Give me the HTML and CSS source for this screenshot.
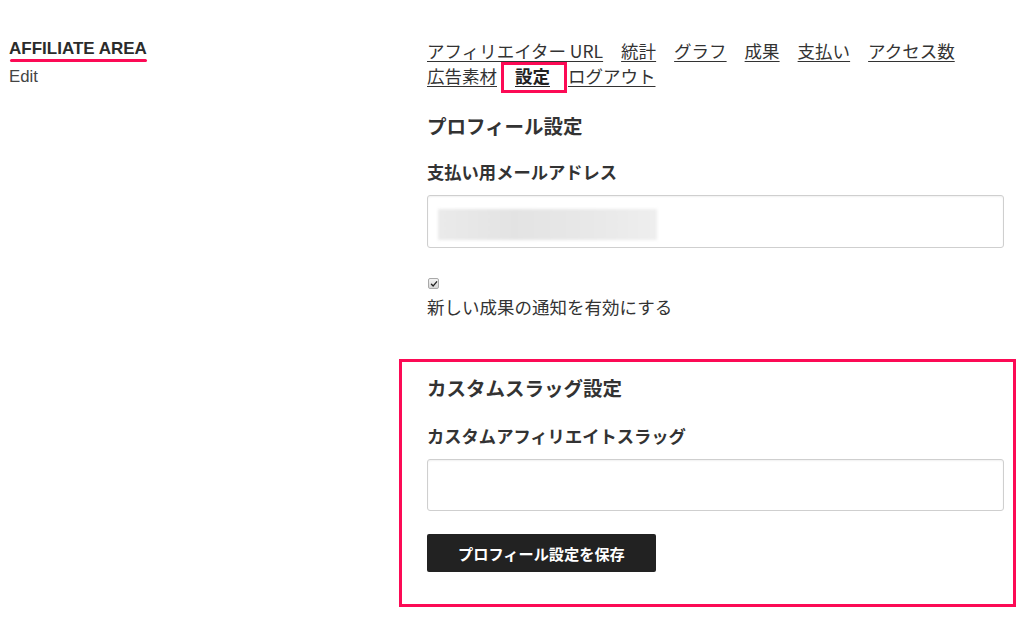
FILE: index.html
```html
<!DOCTYPE html>
<html lang="ja">
<head>
<meta charset="utf-8">
<title>Affiliate Area</title>
<link rel="stylesheet" href="styles.css">
</head>
<body>
<div class="page">
  <aside class="side">
    <h1 class="site-title">AFFILIATE AREA</h1>
    <a class="edit-link" href="#">Edit</a>
  </aside>
  <main class="main">
    <nav class="tabs">
      <a href="#">アフィリエイター URL</a>
      <a href="#">統計</a>
      <a href="#">グラフ</a>
      <a href="#">成果</a>
      <a href="#">支払い</a>
      <a href="#">アクセス数</a>
      <a href="#">広告素材</a>
      <a href="#" class="active">設定</a>
      <a href="#">ログアウト</a>
    </nav>

    <h2 class="section-title">プロフィール設定</h2>
    <label class="field-label">支払い用メールアドレス</label>
    <div class="text-field">
      <div class="blurred-value"></div>
    </div>

    <div class="check-row">
      <span class="checkbox">
        <svg viewBox="0 0 10 10" width="8" height="8"><path d="M1.8 5.2 L4 7.4 L8.3 2.3" fill="none" stroke="#222" stroke-width="1.7" stroke-linecap="round" stroke-linejoin="round"/></svg>
      </span>
      <div class="check-text">新しい成果の通知を有効にする</div>
    </div>

    <section class="slug-box">
      <h2 class="slug-title">カスタムスラッグ設定</h2>
      <label class="field-label slug-label">カスタムアフィリエイトスラッグ</label>
      <div class="text-field slug-field"></div>
      <button class="save-btn" type="button">プロフィール設定を保存</button>
    </section>
  </main>
</div>
</body>
</html>
```

FILE: styles.css
```css
html, body {
  margin: 0;
  padding: 0;
  background: #ffffff;
}

body {
  font-family: "Liberation Sans", "Noto Sans CJK JP", sans-serif;
  color: #333333;
}

.page {
  display: flex;
  padding-top: 38px;
}

.side {
  width: 418px;
  padding-left: 9px;
  box-sizing: border-box;
  display: flex;
  flex-direction: column;
  align-items: flex-start;
}

.site-title {
  margin: 0;
  font-size: 17px;
  line-height: 21px;
  font-weight: bold;
  color: #2b2b2b;
  display: inline-block;
}

.site-title::after {
  content: "";
  display: block;
  height: 3px;
  margin-left: 1px;
  border-radius: 2px;
  background: #fc0a55;
}

.edit-link {
  margin-top: 5px;
  font-size: 16.8px;
  line-height: 20px;
  color: #444444;
  text-decoration: none;
}

.main {
  width: 577px;
  padding-left: 9px;
  display: flex;
  flex-direction: column;
  align-items: flex-start;
}

.tabs {
  display: flex;
  flex-wrap: wrap;
  column-gap: 18px;
  width: 100%;
  font-family: "Noto Sans CJK JP", sans-serif;
  font-size: 17.5px;
  line-height: 25px;
}

.tabs a {
  color: #333333;
  text-decoration: underline;
  text-decoration-thickness: 1px;
  text-underline-offset: 3px;
  position: relative;
}

.tabs a.active {
  font-weight: bold;
  color: #222222;
}

.tabs a.active::after {
  content: "";
  position: absolute;
  left: -14px;
  right: -17px;
  top: -1px;
  bottom: -5px;
  border: 3px solid #fc0a55;
}

.section-title {
  margin: 26px 0 0;
  font-family: "Noto Sans CJK JP", sans-serif;
  font-size: 19.5px;
  line-height: 24px;
  font-weight: bold;
  color: #333333;
}

.field-label {
  display: block;
  margin-top: 23px;
  font-family: "Noto Sans CJK JP", sans-serif;
  font-size: 17.3px;
  line-height: 22px;
  font-weight: bold;
  color: #333333;
}

.text-field {
  margin-top: 12px;
  width: 577px;
  height: 53px;
  box-sizing: border-box;
  border: 1px solid #cfcfcf;
  border-radius: 3px;
  background: #ffffff;
  box-shadow: inset 0 1px 2px rgba(0, 0, 0, 0.06);
  padding: 13px 0 0 10px;
  overflow: hidden;
}

.blurred-value {
  width: 219px;
  height: 31px;
  background: linear-gradient(90deg, #eaeaea 0%, #e3e3e3 35%, #e8e8e8 70%, #eeeeee 100%);
  filter: blur(1.5px);
}

.check-row {
  margin-top: 30px;
  display: flex;
  flex-direction: column;
  align-items: flex-start;
}

.checkbox {
  width: 11px;
  height: 11px;
  margin-left: 1px;
  box-sizing: border-box;
  border: 1px solid #a9a9a9;
  border-radius: 2px;
  background: linear-gradient(#f4f4f4, #d6d6d6);
  display: flex;
  align-items: center;
  justify-content: center;
}

.checkbox svg {
  display: block;
}

.check-text {
  margin-top: 7px;
  font-family: "Noto Sans CJK JP", sans-serif;
  font-size: 17.5px;
  line-height: 22px;
  color: #333333;
}

.slug-box {
  margin: 41px -12px 0 -28px;
  align-self: stretch;
  border: 3px solid #fc0a55;
  padding: 14px 9px 32px 25px;
  display: flex;
  flex-direction: column;
  align-items: flex-start;
}

.slug-title {
  margin: 0;
  font-family: "Noto Sans CJK JP", sans-serif;
  font-size: 19.5px;
  line-height: 24px;
  font-weight: bold;
  color: #333333;
}

.slug-label {
  margin-top: 25px;
}

.slug-field {
  height: 52px;
}

.save-btn {
  margin-top: 23px;
  height: 38px;
  padding: 0 31px;
  border: none;
  border-radius: 2px;
  background: #222222;
  color: #ffffff;
  font-family: "Noto Sans CJK JP", sans-serif;
  font-size: 15.2px;
  font-weight: bold;
  line-height: 38px;
  cursor: pointer;
}
```
